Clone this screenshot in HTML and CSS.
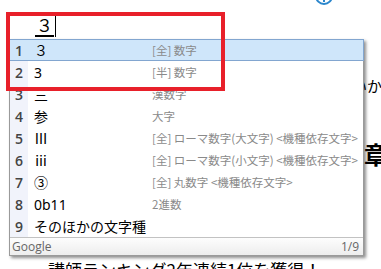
FILE: index.html
```html
<!DOCTYPE html>
<html lang="ja">
<head>
<meta charset="utf-8">
<link rel="stylesheet" href="styles.css">
</head>
<body>
<div class="page">
  <div class="composer"><span class="typed">３</span><span class="caret"></span></div>
  <svg class="info" width="24" height="10" viewBox="0 0 24 10"><circle cx="12" cy="-4" r="8" fill="none" stroke="#2a86cc" stroke-width="2"/><line x1="12" y1="-2" x2="12" y2="2" stroke="#2a86cc" stroke-width="2"/></svg>
  <div class="bg-frag frag-ika">いか</div>
  <div class="bg-frag frag-sho">章</div>
  <div class="bg-frag frag-bottom">講師ランキング2年連続1位を獲得！</div>

  <div class="popup">
    <div class="row selected"><span class="num">1</span><span class="cand">３</span><span class="desc">[全] 数字</span></div>
    <div class="row"><span class="num">2</span><span class="cand">3</span><span class="desc">[半] 数字</span></div>
    <div class="row"><span class="num">3</span><span class="cand">三</span><span class="desc">漢数字</span></div>
    <div class="row"><span class="num">4</span><span class="cand">参</span><span class="desc">大字</span></div>
    <div class="row"><span class="num">5</span><span class="cand">Ⅲ</span><span class="desc">[全] ローマ数字(大文字) &lt;機種依存文字&gt;</span></div>
    <div class="row"><span class="num">6</span><span class="cand">ⅲ</span><span class="desc">[全] ローマ数字(小文字) &lt;機種依存文字&gt;</span></div>
    <div class="row"><span class="num">7</span><span class="cand">③</span><span class="desc">[全] 丸数字 &lt;機種依存文字&gt;</span></div>
    <div class="row"><span class="num">8</span><span class="cand">0b11</span><span class="desc">2進数</span></div>
    <div class="row"><span class="num">9</span><span class="cand">そのほかの文字種</span><span class="desc"></span></div>
    <div class="footer"><span>Google</span><span>1/9</span></div>
  </div>

  <div class="annot"></div>
</div>
</body>
</html>
```
FILE: styles.css
```css
html, body { margin: 0; padding: 0; background: #fff; }
.page {
  position: relative;
  width: 381px;
  height: 269px;
  overflow: hidden;
  font-family: "Noto Sans", "Noto Sans CJK JP", sans-serif;
  color: #000;
}
.composer {
  display: flex;
  align-items: flex-end;
  padding: 15px 0 0 35px;
  height: 22px;
}
.typed {
  font-family: "Noto Sans CJK JP", sans-serif;
  font-size: 17px;
  line-height: 20px;
  border-bottom: 2px solid #000;
  padding: 0 1px;
}
.caret {
  width: 1px;
  height: 22px;
  background: #000;
  margin-left: 1px;
}
.info { position: absolute; left: 312px; top: 0; }
.bg-frag { position: absolute; font-family: "Noto Sans CJK JP", sans-serif; white-space: nowrap; }
.frag-ika { left: 352px; top: 75px; font-size: 15px; }
.frag-sho { left: 364px; top: 136px; font-size: 24px; font-weight: 700; }
.frag-bottom { left: 48px; top: 257px; font-size: 17px; }

.popup {
  position: absolute;
  left: 9px;
  top: 39px;
  width: 353px;
  background: #fff;
  border: 1px solid #9a9a9a;
  border-top: none;
  box-shadow: 2px 2px 3px rgba(0,0,0,0.45);
}
.row {
  display: grid;
  grid-template-columns: 18px 124px 1fr;
  height: 22px;
  align-items: center;
  box-sizing: border-box;
}
.num {
  background: #f1f3fb;
  height: 100%;
  display: flex;
  align-items: center;
  justify-content: center;
  font-size: 14px;
  color: #444;
  font-family: "Open Sans", sans-serif;
  font-weight: 600;
}
.cand {
  padding-left: 6px;
  font-size: 14px;
  font-family: "Noto Sans", "Noto Sans CJK JP", sans-serif;
  white-space: nowrap;
}
.desc {
  font-size: 11.5px;
  color: #8a8a8a;
  white-space: nowrap;
  font-family: "Noto Sans CJK JP", sans-serif;
}
.row.selected {
  background: #cfe6fa;
  border-top: 1px solid #82a6d0;
  border-bottom: 1px solid #82a6d0;
  margin: 0 -1px;
  border-left: 1px solid #82a6d0;
  border-right: 1px solid #82a6d0;
}
.row.selected .num { background: transparent; }
.footer {
  display: flex;
  justify-content: space-between;
  align-items: center;
  height: 17px;
  padding: 0 4px 0 2px;
  border-top: 1px solid #c2c2c2;
  background: linear-gradient(#fdfdfd, #ededed);
  font-size: 12px;
  color: #666;
  font-family: "Open Sans", sans-serif;
}
.annot {
  position: absolute;
  left: 6px;
  top: 12px;
  width: 211px;
  height: 71px;
  border: 4px solid #e8202a;
}
```
